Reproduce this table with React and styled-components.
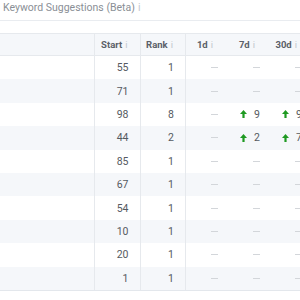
import React from 'react';
import styled, { createGlobalStyle } from 'styled-components';

const GlobalStyle = createGlobalStyle`
  html, body {
    margin: 0;
    padding: 0;
    background: #fff;
    overflow: hidden;
  }
  body {
    font-family: Roboto, "Liberation Sans", sans-serif;
  }
`;

const Panel = styled.div`
  width: 300px;
  height: 300px;
  overflow: hidden;
`;

const Title = styled.div`
  height: 20px;
  padding-left: 3px;
  font-size: 10.5px;
  line-height: 16px;
  color: #8a8f96;
  border-bottom: 1px solid #e9ecf0;
  white-space: nowrap;
`;

const Info = styled.span`
  color: #c3c8ce;
  margin-left: 3px;
  font-weight: 400;
`;

const Table = styled.div`
  margin-top: 12px;
  width: 320px;
  border-bottom: 1px solid #e3e7ec;
`;

const Row = styled.div`
  display: grid;
  grid-template-columns: 95px 45.5px 45.5px 42px 42px 42px;
  height: ${p => (p.$head ? '21px' : '23.4px')};
  background: ${p => (p.$shade ? '#f5f7fa' : '#fff')};
  border-top: ${p => (p.$head ? '1px solid #e6e9ed' : 'none')};
  border-bottom: ${p => (p.$head ? '1px solid #e6e9ed' : 'none')};
`;

const Cell = styled.div`
  display: flex;
  align-items: center;
  justify-content: flex-end;
  padding-right: ${p => p.$pad || 11}px;
  font-size: ${p => (p.$head ? '9.5px' : '10.5px')};
  font-weight: ${p => (p.$head ? 700 : 400)};
  color: ${p => (p.$head ? '#5b6068' : '#555a61')};
  border-right: ${p => (p.$line ? '1px solid #e6e9ed' : 'none')};
  white-space: nowrap;
`;

const Dash = styled.span`
  display: inline-block;
  width: 7px;
  height: 1px;
  background: #d3d6da;
`;

const Change = styled.span`
  display: inline-flex;
  align-items: center;
  gap: 7px;
`;

const UpArrow = () => (
  <svg width="7" height="8" viewBox="0 0 7 8">
    <path d="M3.5 0 L7 4 L4.6 4 L4.6 8 L2.4 8 L2.4 4 L0 4 Z" fill="#1f9a22" />
  </svg>
);

const rows = [
  { start: 55, rank: 1 },
  { start: 71, rank: 1 },
  { start: 98, rank: 8, d7: 9, d30: 9 },
  { start: 44, rank: 2, d7: 2, d30: 7 },
  { start: 85, rank: 1 },
  { start: 67, rank: 1 },
  { start: 54, rank: 1 },
  { start: 10, rank: 1 },
  { start: 20, rank: 1 },
  { start: 1, rank: 1 },
];

const Period = ({ value }) =>
  value ? (
    <Change>
      <UpArrow />
      {value}
    </Change>
  ) : (
    <Dash />
  );

export default function App() {
  return (
    <Panel>
      <GlobalStyle />
      <Title>
        Keyword Suggestions (Beta)<Info>i</Info>
      </Title>
      <Table>
        <Row $head $shade>
          <Cell $head $line />
          <Cell $head $line $pad={12}>Start<Info>i</Info></Cell>
          <Cell $head $line $pad={12}>Rank<Info>i</Info></Cell>
          <Cell $head $pad={15}>1d<Info>i</Info></Cell>
          <Cell $head $pad={15}>7d<Info>i</Info></Cell>
          <Cell $head $pad={15}>30d<Info>i</Info></Cell>
        </Row>
        {rows.map((r, i) => (
          <Row key={i} $shade={i % 2 === 1}>
            <Cell $line />
            <Cell $line>{r.start}</Cell>
            <Cell $line>{r.rank}</Cell>
            <Cell $pad={10}><Period /></Cell>
            <Cell $pad={10}><Period value={r.d7} /></Cell>
            <Cell $pad={10}><Period value={r.d30} /></Cell>
          </Row>
        ))}
      </Table>
    </Panel>
  );
}
